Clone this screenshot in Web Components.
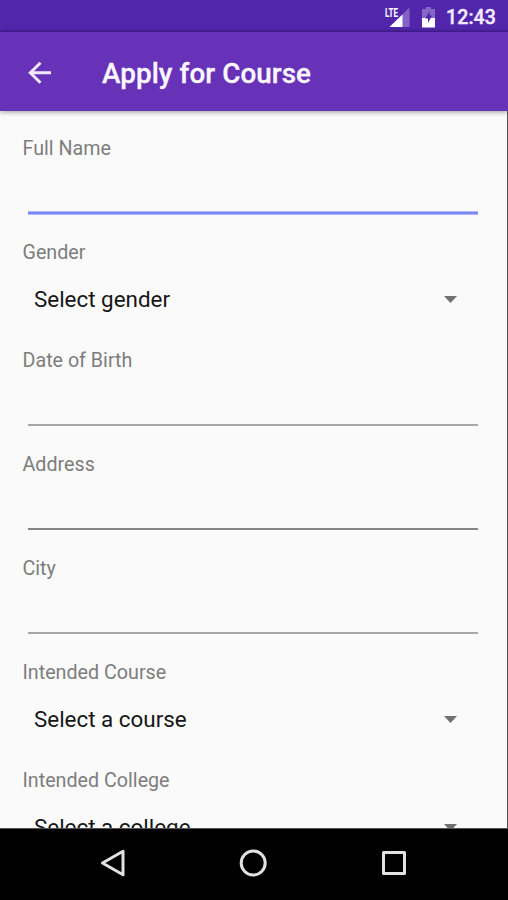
<!DOCTYPE html>
<html lang="en">
<head>
<meta charset="utf-8">
<title>Apply for Course</title>
<style>
html, body { margin: 0; height: 100%; overflow: hidden; }
body { font-family: Roboto, "Liberation Sans", sans-serif; background: #000; }
</style>
</head>
<body>
<course-app></course-app>
<script>
const define = (name, html) => {
  const template = document.createElement('template');
  template.innerHTML = html;
  customElements.define(name, class extends HTMLElement {
    constructor() {
      super();
      this.attachShadow({ mode: 'open' }).append(template.content.cloneNode(true));
    }
  });
};

define('status-bar', `
<style>
:host { display: flex; box-sizing: border-box; height: 32px; padding: 3px 12px 0 0; align-items: center; justify-content: flex-end; background: linear-gradient(#5126aa 0 29px, #451d98 32px); color: #f2ebff; }
svg { display: block; overflow: visible; }
.battery { margin-left: 10px; }
.time { margin-left: 10px; font-size: 19.5px; font-weight: 500; line-height: 30px; letter-spacing: .1px; -webkit-text-stroke: .4px; }
.lte { font: 700 13px Roboto, sans-serif; }
</style>
<svg width="27" height="24" viewBox="0 0 27 24">
  <path d="M25.5 1.5V21H5.5Z" fill="#8563c5"/>
  <path d="M18.5 8.5V21H5.5Z" fill="#fff"/>
  <text class="lte" x="1" y="10.5" textLength="13" lengthAdjust="spacingAndGlyphs" fill="#fff" stroke="#5126aa" stroke-width="1.5" paint-order="stroke">LTE</text>
</svg>
<svg class="battery" width="15" height="22" viewBox="0 0 15 22">
  <path d="M5 0h5v2h4v9H1V2h4z" fill="#8866c8"/>
  <path d="M1 11h13v9.500H1z" fill="#fff"/>
  <path d="M8.600 4 4.300 11.500h2.700v4.500l4-7.500H8.600z" fill="#5126aa"/>
</svg>
<span class="time">12:43</span>`);

define('app-bar', `
<style>
:host { display: flex; box-sizing: border-box; height: 79px; padding: 3px 0 0 28px; align-items: center; background: #6732b8; color: #fcf7ff; box-shadow: 0 1px 5px rgba(0,0,0,.38); position: relative; }
svg { display: block; }
h1 { margin: 1px 0 0 50px; font-size: 27.8px; font-weight: 500; line-height: 32px; letter-spacing: .08px; white-space: nowrap; -webkit-text-stroke: .3px; }
</style>
<svg width="24" height="24" viewBox="0 0 24 24" fill="none" stroke="#f1e8ff" stroke-width="3"><path d="M23 11.700H2.500M12.500 1.700 2.300 11.700l10.200 10"/></svg>
<h1><slot></slot></h1>`);

define('form-label', `
<style>
:host { display: block; height: 24px; padding-left: 22.5px; color: #7d7d7d; font-size: 19.7px; line-height: 26px; white-space: nowrap; }
</style><slot></slot>`);

define('text-field', `
<style>
:host { display: flex; flex-direction: column; height: 104px; flex: none; }
.line { margin: 52px 29px 0 28px; height: 2px; background: linear-gradient(var(--line, #a8a8a8) 0 100%); }
:host([focused]) .line { margin-top: 51px; height: 4px; background: linear-gradient(#acb6f8 1px, #7b8af0 1px 3px, #acb6f8 3px); }
</style>
<form-label><slot></slot></form-label><div class="line"></div>`);

define('select-field', `
<style>
:host { display: block; height: 108px; flex: none; }
.row { display: flex; height: 70px; align-items: center; justify-content: space-between; padding: 0 50px 0 34px; color: #161616; font-size: 22.4px; line-height: 30px; }
svg { display: block; }
</style>
<form-label><slot></slot></form-label>
<div class="row"><slot name="value"></slot><svg width="13" height="7" viewBox="0 0 13 7"><path d="M0 0H13L6.5 7Z" fill="#707070"/></svg></div>`);

define('form-view', `
<style>
:host { display: flex; flex-direction: column; flex: 1; min-height: 0; box-sizing: border-box; padding-top: 25px; overflow: hidden; background: #fafafa; border-right: 1px solid #555; border-bottom: 1px solid #555; }
</style><slot></slot>`);

define('nav-bar', `
<style>
:host { display: flex; height: 71px; box-sizing: border-box; padding: 0 99px 3px 98px; justify-content: space-between; align-items: center; background: #000; }
svg { display: block; fill: none; stroke: #e2e2e2; stroke-width: 3; }
</style>
<svg width="30" height="30" viewBox="0 0 30 30"><path d="M25 3.3V26.7L4.5 15Z" stroke-linejoin="round"/></svg>
<svg width="30" height="30" viewBox="0 0 30 30"><circle cx="14.2" cy="15" r="12"/></svg>
<svg width="30" height="30" viewBox="0 0 30 30"><path d="M4.5 4.5h21v21h-21z" stroke-linejoin="round"/></svg>`);

define('course-app', `
<style>
:host { display: flex; flex-direction: column; width: 508px; height: 900px; background: #000; overflow: hidden; }
.dark { --line: #868686; }
</style>
<status-bar></status-bar>
<app-bar>Apply for Course</app-bar>
<form-view>
  <text-field focused>Full Name</text-field>
  <select-field>Gender<span slot="value">Select gender</span></select-field>
  <text-field>Date of Birth</text-field>
  <text-field class="dark">Address</text-field>
  <text-field>City</text-field>
  <select-field>Intended Course<span slot="value">Select a course</span></select-field>
  <select-field>Intended College<span slot="value">Select a college</span></select-field>
</form-view>
<nav-bar></nav-bar>`);
</script>
</body>
</html>
